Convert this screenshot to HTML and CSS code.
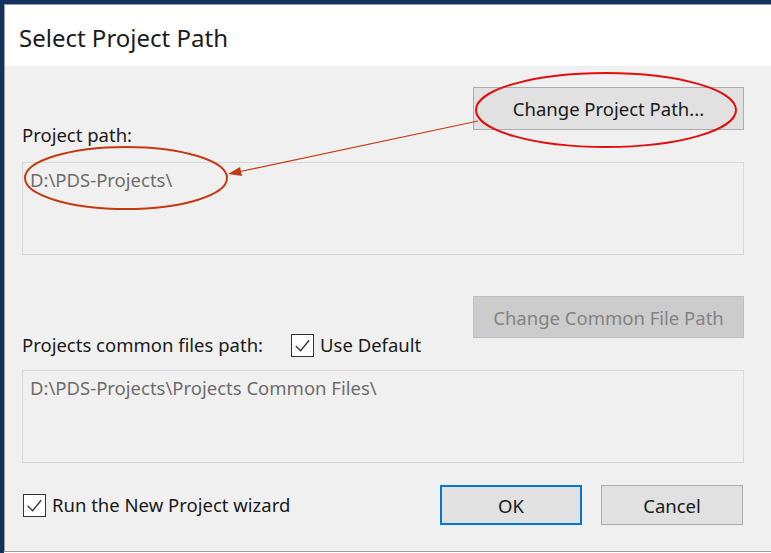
FILE: index.html
```html
<!DOCTYPE html>
<html lang="en">
<head>
    <meta charset="UTF-8">
    <meta name="viewport" content="width=device-width, initial-scale=1.0">
    <title>Select Project Path</title>
    <link rel="stylesheet" href="styles.css">
</head>
<body>
    <div class="frame">
        <div class="dialog">
            <div class="titlebar">Select Project Path</div>
            <div class="content">
                <div class="btn-row">
                    <button class="btn wide">Change Project Path...</button>
                </div>
                <label class="field-label">Project path:</label>
                <div class="path-box">D:\PDS-Projects\</div>

                <div class="btn-row second">
                    <button class="btn wide" disabled>Change Common File Path</button>
                </div>
                <div class="common-row">
                    <span class="field-label">Projects common files path:</span>
                    <label class="check"><span class="box"><svg viewBox="0 0 22 22"><path d="M4 11.5 L9 16.5 L18 5.5" fill="none" stroke="#333" stroke-width="1.4"/></svg></span>Use Default</label>
                </div>
                <div class="path-box">D:\PDS-Projects\Projects Common Files\</div>

                <div class="footer">
                    <label class="check"><span class="box"><svg viewBox="0 0 22 22"><path d="M4 11.5 L9 16.5 L18 5.5" fill="none" stroke="#333" stroke-width="1.4"/></svg></span>Run the New Project wizard</label>
                    <div class="actions">
                        <button class="btn default">OK</button>
                        <button class="btn">Cancel</button>
                    </div>
                </div>
            </div>
        </div>

        <!-- red markup drawn on top of the screenshot -->
        <svg class="markup" width="771" height="553" viewBox="0 0 771 553">
            <ellipse cx="606" cy="110" rx="130" ry="37" fill="none" stroke="#e01010" stroke-width="2"/>
            <ellipse cx="126" cy="178" rx="101" ry="31" fill="none" stroke="#c33a10" stroke-width="2"/>
            <line x1="478" y1="121" x2="238" y2="172" stroke="#c33a10" stroke-width="1.2"/>
            <polygon points="228,174 240,167 242,176" fill="#c33a10"/>
        </svg>
    </div>
</body>
</html>
```

FILE: styles.css
```css
body {
    margin: 0;
    font-family: "Noto Sans", "Open Sans", sans-serif;
    background-color: #ffffff;
    color: #1a1a1a;
}
.frame {
    position: relative;
    width: 771px;
    height: 553px;
    box-sizing: border-box;
    border-top: 4px solid #12315e;
    border-left: 4px solid #12315e;
    overflow: hidden;
}
.dialog {
    height: 546px;
    border-top: 1px solid #9c9c9c;
    border-left: 1px solid #9c9c9c;
    border-bottom: 1px solid #a0a0a0;
    background-color: #f0f0f0;
}
.titlebar {
    height: 61px;
    box-sizing: border-box;
    background-color: #ffffff;
    padding: 18px 0 0 14px;
    font-size: 24px;
    line-height: 30px;
    color: #1b1b1b;
}
.content {
    padding: 21px 27px 0 17px;
}
.btn-row {
    display: flex;
    justify-content: flex-end;
}
.btn {
    font-family: inherit;
    font-size: 18.5px;
    color: #1a1a1a;
    background-color: #e1e1e1;
    border: 1px solid #adadad;
    padding: 0;
    height: 43px;
}
.wide {
    width: 271px;
}
.btn:disabled {
    background-color: #cccccc;
    border-color: #bfbfbf;
    color: #838383;
    height: 42px;
}
.field-label {
    display: block;
    font-size: 18.5px;
    line-height: 22px;
    margin-top: -6px;
}
.path-box {
    margin-top: 16px;
    height: 93px;
    box-sizing: border-box;
    border: 1px solid #d9d9d9;
    padding: 6px 7px;
    font-size: 18.5px;
    line-height: 22px;
    color: #6d6d6d;
}
.second {
    margin-top: 41px;
}
.common-row {
    display: flex;
    align-items: center;
    gap: 28px;
    margin-top: -5px;
    height: 24px;
}
.common-row .field-label {
    margin-top: 0;
}
.common-row + .path-box {
    margin-top: 13px;
}
.check {
    display: flex;
    align-items: center;
    gap: 6px;
    font-size: 18.5px;
    line-height: 22px;
}
.box {
    width: 21px;
    height: 21px;
    border: 1px solid #333333;
    background-color: #ffffff;
    display: flex;
}
.box svg {
    width: 21px;
    height: 21px;
}
.footer {
    display: flex;
    justify-content: space-between;
    align-items: center;
    margin-top: 22px;
}
.footer .check {
    margin-left: 1px;
}
.actions {
    display: flex;
    gap: 19px;
    margin-right: 1px;
}
.actions .btn {
    width: 142px;
    height: 40px;
}
.btn.default {
    border: 2px solid #0078d7;
}
.markup {
    position: absolute;
    left: -4px;
    top: -4px;
    pointer-events: none;
}
```
